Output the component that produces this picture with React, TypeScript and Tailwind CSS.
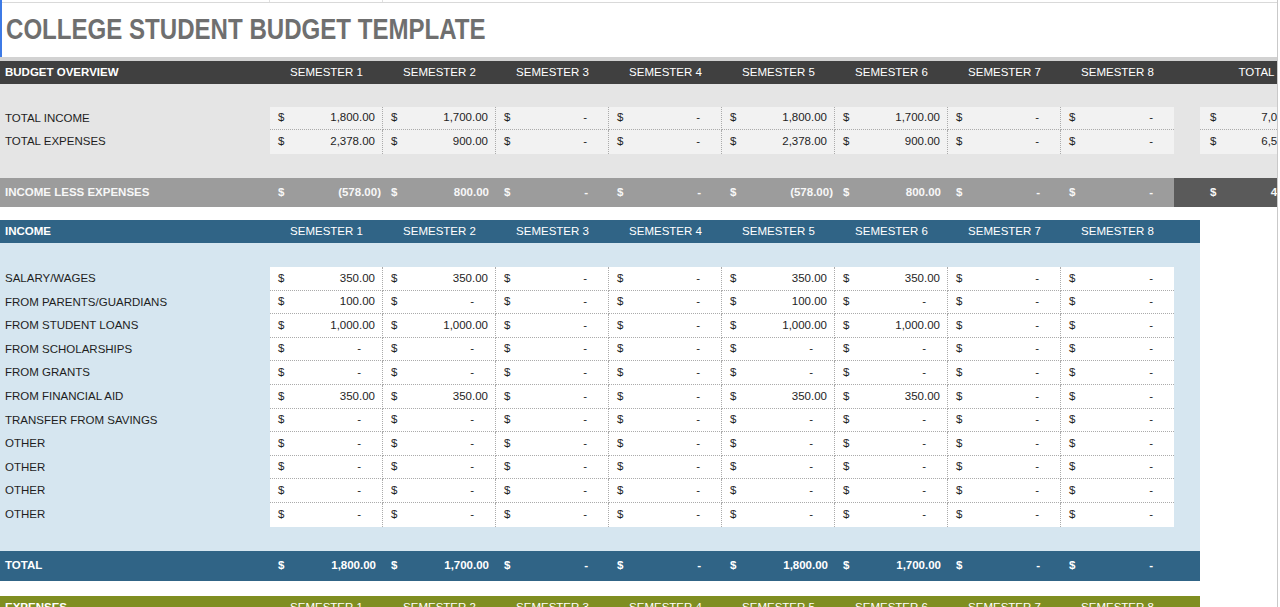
import React from "react";

type V = number | null;

const SEMS = [1, 2, 3, 4, 5, 6, 7, 8];

function fmt(v: number): string {
  const a = Math.abs(v);
  const [i, d] = a.toFixed(2).split(".");
  const withComma = i.replace(/\B(?=(\d{3})+(?!\d))/g, ",");
  return `${withComma}.${d}`;
}

function Money({ v, total }: { v: V; total?: boolean }) {
  return (
    <div className={`flex h-full w-full items-center justify-between ${total ? "pl-[10px]" : "pl-[8px]"}`}>
      <span>$</span>
      {v === null || v === 0 ? (
        <span className="pr-[21px]">-</span>
      ) : v < 0 ? (
        <span className="pr-[2px]">({fmt(v)})</span>
      ) : (
        <span className="pr-[7px]">{fmt(v)}</span>
      )}
    </div>
  );
}

function HeaderRow({ title, bg, total }: { title: string; bg: string; total?: boolean }) {
  return (
    <div className={`flex h-[23px] flex-none items-center text-white ${bg}`}>
      <div className="w-[270px] flex-none pl-[5px] font-bold">{title}</div>
      {SEMS.map((n) => (
        <div key={n} className="w-[113px] flex-none text-center">
          SEMESTER {n}
        </div>
      ))}
      <div className="w-[26px] flex-none" />
      {total && <div className="w-[113px] flex-none text-center">TOTAL</div>}
    </div>
  );
}

const overviewRows: { label: string; vals: V[]; total: number }[] = [
  { label: "TOTAL INCOME", vals: [1800, 1700, null, null, 1800, 1700, null, null], total: 7000 },
  { label: "TOTAL EXPENSES", vals: [2378, 900, null, null, 2378, 900, null, null], total: 6556 },
];

const incomeRows: { label: string; vals: V[]; h: string }[] = [
  { label: "SALARY/WAGES", vals: [350, 350, null, null, 350, 350, null, null], h: "h-[24px]" },
  { label: "FROM PARENTS/GUARDIANS", vals: [100, null, null, null, 100, null, null, null], h: "h-[23px]" },
  { label: "FROM STUDENT LOANS", vals: [1000, 1000, null, null, 1000, 1000, null, null], h: "h-[24px]" },
  { label: "FROM SCHOLARSHIPS", vals: [null, null, null, null, null, null, null, null], h: "h-[23px]" },
  { label: "FROM GRANTS", vals: [null, null, null, null, null, null, null, null], h: "h-[24px]" },
  { label: "FROM FINANCIAL AID", vals: [350, 350, null, null, 350, 350, null, null], h: "h-[24px]" },
  { label: "TRANSFER FROM SAVINGS", vals: [null, null, null, null, null, null, null, null], h: "h-[23px]" },
  { label: "OTHER", vals: [null, null, null, null, null, null, null, null], h: "h-[24px]" },
  { label: "OTHER", vals: [null, null, null, null, null, null, null, null], h: "h-[23px]" },
  { label: "OTHER", vals: [null, null, null, null, null, null, null, null], h: "h-[24px]" },
  { label: "OTHER", vals: [null, null, null, null, null, null, null, null], h: "h-[24px]" },
];

function Overview() {
  return (
    <div className="flex flex-col">
      <HeaderRow title="BUDGET OVERVIEW" bg="bg-[#404040]" total />
      <div className="flex flex-col bg-[#e5e5e5] text-[#1e1e1e]">
        <div className="h-[23px]" />
        {overviewRows.map((r, ri) => (
          <div key={r.label} className={`flex ${ri === 0 ? "h-[23px]" : "h-[24px]"}`}>
            <div className="flex w-[270px] flex-none items-center pl-[5px]">{r.label}</div>
            {r.vals.map((v, i) => (
              <div
                key={i}
                className={`w-[113px] flex-none bg-[#f2f2f2] ${i < 7 ? "border-r border-dotted border-[#ababab]" : ""} ${
                  ri === 0 ? "border-b border-dotted border-[#ababab]" : ""
                }`}
              >
                <Money v={v} />
              </div>
            ))}
            <div className="w-[26px] flex-none" />
            <div
              className={`w-[113px] flex-none bg-[#f2f2f2] ${ri === 0 ? "border-b border-dotted border-[#ababab]" : ""}`}
            >
              <Money v={r.total} total />
            </div>
          </div>
        ))}
        <div className="h-[24px]" />
      </div>
      <div className="flex h-[29px] font-bold text-[#f7f7f7]">
        <div className="flex w-[270px] flex-none items-center bg-[#9c9c9c] pl-[5px]">INCOME LESS EXPENSES</div>
        {[-578, 800, null, null, -578, 800, null, null].map((v, i) => (
          <div key={i} className="w-[113px] flex-none bg-[#9c9c9c]">
            <Money v={v} />
          </div>
        ))}
        <div className="w-[26px] flex-none bg-[#5a5a5a]" />
        <div className="w-[113px] flex-none bg-[#5a5a5a]">
          <Money v={444} total />
        </div>
      </div>
    </div>
  );
}

function Income() {
  return (
    <div className="flex w-[1200px] flex-col">
      <HeaderRow title="INCOME" bg="bg-[#306486]" />
      <div className="flex flex-col bg-[#d6e6f0] text-[#1e1e1e]">
        <div className="h-[24px]" />
        {incomeRows.map((r, ri) => (
          <div key={ri} className={`flex ${r.h}`}>
            <div className="flex w-[270px] flex-none items-center pl-[5px]">{r.label}</div>
            {r.vals.map((v, i) => (
              <div
                key={i}
                className={`w-[113px] flex-none bg-white ${i < 7 ? "border-r border-dotted border-[#ababab]" : ""} ${
                  ri < incomeRows.length - 1 ? "border-b border-dotted border-[#ababab]" : ""
                }`}
              >
                <Money v={v} />
              </div>
            ))}
            <div className="w-[26px] flex-none" />
          </div>
        ))}
        <div className="h-[24px]" />
      </div>
      <div className="flex h-[30px] bg-[#306486] font-bold text-white">
        <div className="flex w-[270px] flex-none items-center pl-[5px]">TOTAL</div>
        {[1800, 1700, null, null, 1800, 1700, null, null].map((v, i) => (
          <div key={i} className="w-[113px] flex-none">
            <Money v={v} />
          </div>
        ))}
        <div className="w-[26px] flex-none" />
      </div>
    </div>
  );
}

export default function App() {
  return (
    <div className="relative flex h-[607px] w-[1280px] overflow-hidden bg-white font-['Liberation_Sans',Arial,sans-serif] text-[11.5px]">
      <div className="flex w-[1277px] flex-none flex-col overflow-hidden">
        <div className="flex h-[3px] flex-none border-b border-[#d9d9d9]">
          <div className="w-[270px] flex-none border-r border-[#e0e0e0]" />
          <div className="w-[113px] flex-none border-r border-[#e0e0e0]" />
        </div>
        <div className="flex h-[54px] flex-none items-center pb-[2px] pl-[6px]">
          <span className="inline-block origin-left scale-x-[0.83] text-[29px] font-bold leading-none text-[#6f6f6f]">
            COLLEGE STUDENT BUDGET TEMPLATE
          </span>
        </div>
        <div className="h-[4px] flex-none bg-[#d2d2d2]" />
        <Overview />
        <div className="h-[13px] flex-none" />
        <Income />
        <div className="h-[15px] flex-none" />
        <div className="w-[1200px]">
          <HeaderRow title="EXPENSES" bg="bg-[#7f8e21]" />
        </div>
      </div>
      <div className="h-full w-px flex-none bg-[#c9c9c9]" />
      <div className="absolute left-0 top-0 h-[57px] w-[2px] bg-[#3d7ae6]" />
    </div>
  );
}
